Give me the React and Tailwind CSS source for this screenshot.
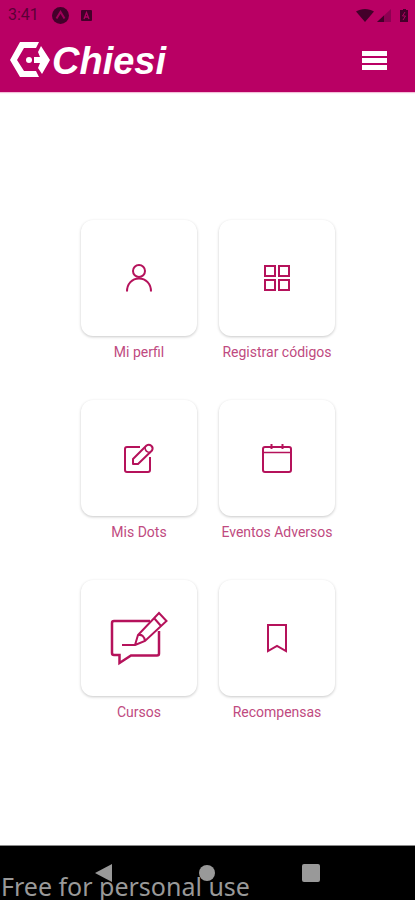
const iconProps = {
	fill: 'none',
	stroke: '#b5125b',
	strokeWidth: 2,
	'aria-hidden': true,
}

const UserIcon = () => (
	<svg width="28" height="30" viewBox="0 0 28 30" {...iconProps}>
		<circle cx="14" cy="8" r="6" />
		<path d="M2 28.500C2 21 7 15.500 14 15.500S26 21 26 28.500" />
	</svg>
)

const GridIcon = () => (
	<svg width="28" height="28" viewBox="0 0 28 28" {...iconProps}>
		<rect x="2" y="2" width="10" height="10" />
		<rect x="16" y="2" width="10" height="10" />
		<rect x="2" y="16" width="10" height="10" />
		<rect x="16" y="16" width="10" height="10" />
	</svg>
)

const EditIcon = () => (
	<svg width="32" height="32" viewBox="0 0 32 32" {...iconProps} strokeLinejoin="round">
		<path d="M17 5H4A2 2 0 0 0 2 7V28A2 2 0 0 0 4 30H25A2 2 0 0 0 27 28V15" />
		<path d="M10 22V17L23.500 3.500A3.800 3.800 0 0 1 29 8.500L15 22Z" />
		<path d="M22 5C22 8.500 24 10.500 27.500 10.500" strokeWidth="1.500" />
	</svg>
)

const CalendarIcon = () => (
	<svg width="32" height="32" viewBox="0 0 32 32" {...iconProps}>
		<rect x="2" y="5" width="28" height="25" rx="2" />
		<path d="M2 10.500H30" strokeWidth="1.500" />
		<path d="M10.500 2V7M21.500 2V7" />
	</svg>
)

const CourseIcon = () => (
	<svg width="60" height="56" viewBox="0 0 60 56" {...iconProps}>
		<path d="M41 11H5A2 2 0 0 0 3 13V43A2 2 0 0 0 5 45H10.500V53L22 45.500H48A2 2 0 0 0 50 43.500V21" strokeWidth="2.500" />
		<path d="M13 35H26L29 25L50 3L57.500 11L36 31L26 35M29 25Q35 24 36 31M45 8L52 16" />
	</svg>
)

const BookmarkIcon = () => (
	<svg width="22" height="30" viewBox="0 0 22 30" {...iconProps}>
		<path d="M2 2H20V28L11 23L2 28Z" />
	</svg>
)

const items = [
	{ label: 'Mi perfil', icon: UserIcon },
	{ label: 'Registrar códigos', icon: GridIcon },
	{ label: 'Mis Dots', icon: EditIcon },
	{ label: 'Eventos Adversos', icon: CalendarIcon },
	{ label: 'Cursos', icon: CourseIcon },
	{ label: 'Recompensas', icon: BookmarkIcon },
]

const StatusBar = () => (
	<div className="flex h-7 items-center justify-between pt-0.5 pl-2 pr-1.5 text-[#5c0036]">
		<div className="flex items-center">
			<span className="w-11 text-base leading-6">3:41</span>
			<svg width="17" height="17" viewBox="0 0 17 17" aria-hidden="true">
				<circle cx="8.500" cy="8.500" r="8.500" fill="#43002a" />
				<path d="M4.500 11.500L8.500 5L12.500 11.500" fill="none" stroke="#a00059" strokeWidth="2" />
			</svg>
			<svg className="ml-3" width="11" height="11" viewBox="0 0 11 11" aria-hidden="true">
				<rect width="11" height="11" rx="1" fill="#43002a" />
				<path d="M3 9L5.500 2.500L8 9M4 7H7" fill="none" stroke="#b00061" strokeWidth="1.300" />
			</svg>
		</div>
		<svg width="53" height="15" viewBox="0 0 53 15" aria-hidden="true">
			<path d="M0 3.500C5 0 13 0 18 3.500L9 14Z" fill="#43002a" />
			<path d="M35 1V14H21Z" fill="#8d0052" />
			<path d="M28 7.500V14H21Z" fill="#43002a" />
			<path d="M45 2H47V1H50V2H52V14H44V2Z" fill="#43002a" />
			<path d="M49 4L46.500 8H49.500L47 12" fill="none" stroke="#b00061" strokeWidth="1" />
		</svg>
	</div>
)

const Logo = () => (
	<a href="#inicio" className="flex items-center">
		<svg width="42" height="38" viewBox="0 0 42 38" fill="#fff" aria-hidden="true">
			<path d="M12 1H31L28 7H16L9 19L16 30H28L31 36H12L2 19Z" />
			<path d="M33 5L42 19L34 33L30 27L32 22H26V16H32L30 11Z" />
			<circle cx="21" cy="19" r="3" />
		</svg>
		<span className="ml-0.5 pt-0.5 font-['Liberation_Sans'] text-[38px] leading-10 font-bold text-white italic">Chiesi</span>
	</a>
)

const App = () => {
	return (
		<div className="relative flex min-h-screen flex-col bg-white font-[Roboto,sans-serif]">
			<header className="h-[92px] bg-[#b90064] shadow-[0_1px_1px_#f3bfd8]">
				<StatusBar />
				<div className="flex h-16 items-center justify-between pr-7 pl-2">
					<Logo />
					<button type="button" aria-label="Menú" className="flex w-[25px] flex-col gap-0.5">
						<span className="h-[5px] bg-white" />
						<span className="h-[5px] bg-white" />
						<span className="h-[5px] bg-white" />
					</button>
				</div>
			</header>

			<main className="flex flex-1 items-center justify-center pt-1 pl-px">
				<div className="grid grid-cols-[116px_116px] gap-x-[22px] gap-y-[38px]">
					{items.map(({ label, icon: Icon }) => (
						<button key={label} type="button" className="flex flex-col items-center">
							<span className="flex h-[116px] w-full items-center justify-center rounded-xl bg-white shadow-[0_1px_3px_rgba(0,0,0,0.22)]">
								<Icon />
							</span>
							<span className="mt-1.5 text-sm leading-5 whitespace-nowrap text-[#c04a80]">{label}</span>
						</button>
					))}
				</div>
			</main>

			{/* Android navigation */}
			<nav className="flex h-[55px] items-center justify-around border-t border-[#8a8a8a] bg-black px-[52px]">
				<button type="button" aria-label="Atrás">
					<svg width="18" height="20" viewBox="0 0 18 20" fill="#999"><path d="M0 10L17 1V19Z" /></svg>
				</button>
				<button type="button" aria-label="Inicio" className="h-4 w-4 rounded-full bg-[#999]" />
				<button type="button" aria-label="Recientes" className="h-[18px] w-[18px] rounded-xs bg-[#999]" />
			</nav>

			<span className="absolute bottom-0 left-0 pl-px font-['Noto_Sans'] text-[25px] leading-7 whitespace-nowrap text-[#999]">
				Free for personal use
			</span>
		</div>
	)
}

export default App
